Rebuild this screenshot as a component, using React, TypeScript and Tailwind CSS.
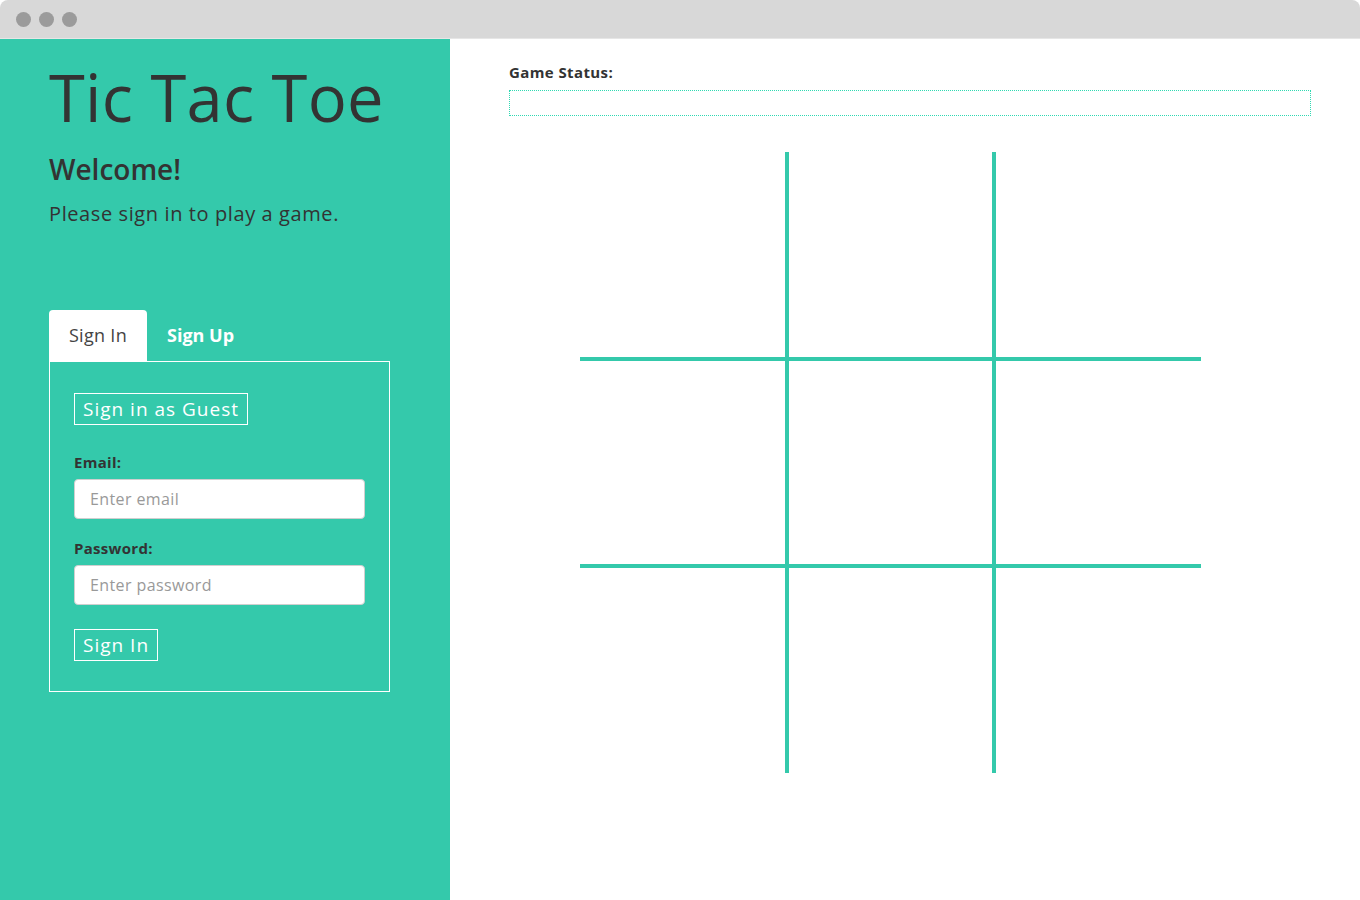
import React from "react";

const font = { fontFamily: "'Open Sans', 'Noto Sans', sans-serif" };

export default function App() {
  const cells = Array.from({ length: 9 }, (_, i) => i);
  return (
    <div className="w-[1360px] h-[900px] bg-white flex flex-col overflow-hidden" style={font}>
      <div className="h-[39px] bg-[#d8d8d8] rounded-t-[8px] flex items-center gap-[8px] pl-[16px] border-b border-[#e6e6e6] shrink-0">
        <span className="w-[15px] h-[15px] rounded-full bg-[#9b9b9b]" />
        <span className="w-[15px] h-[15px] rounded-full bg-[#9b9b9b]" />
        <span className="w-[15px] h-[15px] rounded-full bg-[#9b9b9b]" />
      </div>
      <div className="flex flex-1">
        <div className="w-[450px] bg-[#34c9ab] pl-[49px] pr-[20px] pt-[16px] text-[#333]">
          <h1 className="text-[65px] leading-[84px] tracking-[0.3px]">Tic Tac Toe</h1>
          <h2 className="mt-[14px] text-[28px] leading-[32px] font-semibold tracking-[0px]">Welcome!</h2>
          <p className="mt-[16px] text-[20px] leading-[26px] tracking-[0.6px]">Please sign in to play a game.</p>
          <div className="mt-[83px] flex h-[51px]">
            <div className="w-[98px] bg-white rounded-t-[4px] flex items-center justify-center text-[18px] text-[#444] tracking-[0.3px]">
              Sign In
            </div>
            <div className="px-[20px] flex items-center text-[18px] font-bold text-white">Sign Up</div>
          </div>
          <div className="w-[341px] h-[331px] border border-white pl-[24px] pt-[31px]">
            <button className="h-[32px] px-[8px] border border-white text-white text-[19px] tracking-[1px] leading-none">
              Sign in as Guest
            </button>
            <div className="mt-[27px] text-[15px] font-bold leading-[20px] tracking-[0.3px]">Email:</div>
            <div className="mt-[7px] w-[291px] h-[40px] bg-white rounded-[4px] border border-[#cfcfcf] flex items-center px-[15px] text-[16px] text-[#999] tracking-[0.4px]">
              Enter email
            </div>
            <div className="mt-[19px] text-[15px] font-bold leading-[20px] tracking-[0.3px]">Password:</div>
            <div className="mt-[7px] w-[291px] h-[40px] bg-white rounded-[4px] border border-[#cfcfcf] flex items-center px-[15px] text-[16px] text-[#999] tracking-[0.4px]">
              Enter password
            </div>
            <button className="mt-[24px] h-[32px] px-[8px] border border-white text-white text-[19px] tracking-[1px] leading-none">
              Sign In
            </button>
          </div>
        </div>
        <div className="flex-1 pl-[59px] pr-[49px] pt-[23px]">
          <div className="text-[15px] font-bold text-[#333] leading-[20px] tracking-[0.4px]">Game Status:</div>
          <div className="mt-[8px] h-[26px] border border-dotted border-[#2fd9b2]" />
          <div className="mt-[36px] ml-[71px] w-[621px] h-[621px] grid grid-cols-3 grid-rows-3">
            {cells.map((i) => {
              const col = i % 3;
              const row = Math.floor(i / 3);
              const cls =
                (col < 2 ? "border-r-[2px] " : "") +
                (col > 0 ? "border-l-[2px] " : "") +
                (row < 2 ? "border-b-[2px] " : "") +
                (row > 0 ? "border-t-[2px] " : "");
              return <div key={i} className={cls + "border-[#34c9ab]"} />;
            })}
          </div>
        </div>
      </div>
    </div>
  );
}
